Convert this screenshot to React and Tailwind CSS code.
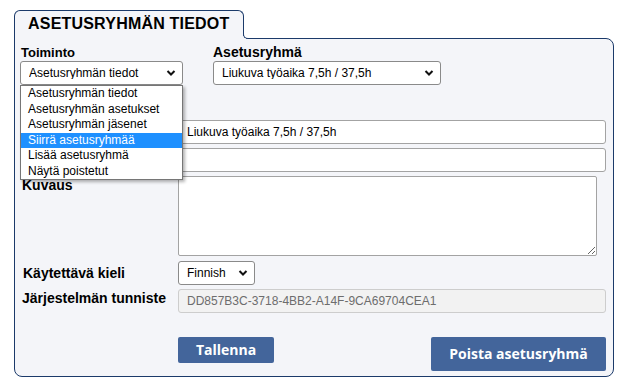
import React from 'react';

const toiminnot = [
  'Asetusryhmän tiedot',
  'Asetusryhmän asetukset',
  'Asetusryhmän jäsenet',
  'Siirrä asetusryhmää',
  'Lisää asetusryhmä',
  'Näytä poistetut',
];

const Chevron = () => (
  <svg
    className="absolute right-[7px] top-1/2 -translate-y-1/2 pointer-events-none"
    width="10"
    height="7"
    viewBox="0 0 10 7"
  >
    <polyline points="1.5,1.5 5,5 8.5,1.5" fill="none" stroke="#111" strokeWidth="2" />
  </svg>
);

const Select = ({ width, value, options }) => (
  <div className={`relative ${width}`}>
    <select
      defaultValue={value}
      className="appearance-none w-full h-[24px] bg-white border border-[#8a8a8a] rounded-[3px] pl-[8px] pr-6 text-[12px] text-black leading-none outline-none"
    >
      {options.map((o) => (
        <option key={o}>{o}</option>
      ))}
    </select>
    <Chevron />
  </div>
);

const Label = ({ children, className = '' }) => (
  <div className={`text-[14px] leading-[16px] font-bold text-black ${className}`}>{children}</div>
);

const App = () => {
  return (
    <div className="w-[622px] h-[384px] bg-white pt-[10px] pl-[14px] font-['Liberation_Sans',Arial,sans-serif]">
      <div className="w-[600px]">
        {/* välilehti */}
        <div className="relative z-10 w-[230px] h-[29px] -mb-px border border-b-0 border-[#1b3a6a] rounded-t-[6px] bg-[#f4f5f9] pl-[13px] pt-[3px]">
          <div className="text-[16px] leading-[20px] font-bold tracking-[0.2px] text-black">
            ASETUSRYHMÄN TIEDOT
          </div>
          <div className="absolute bottom-0 -right-[3px] w-[4px] h-[3px] bg-[#f4f5f9]" />
          <div className="absolute bottom-0 -right-[6px] w-[6px] h-[6px] border-l border-b border-[#1b3a6a] rounded-bl-[5px] bg-white" />
        </div>

        <div className="relative h-[339px] border border-[#1b3a6a] rounded-tr-[8px] rounded-b-[8px] bg-[#f4f5f9] pt-[6px]">
          {/* ylärivi */}
          <div className="flex gap-[30px] pl-[5px]">
            <div className="relative">
              <div className="h-[15px] text-[13px] leading-[15px] font-bold text-black pl-px">Toiminto</div>
              <Select width="w-[163px]" value="Asetusryhmän tiedot" options={toiminnot} />
              {/* avattu lista */}
              <div className="absolute z-20 left-0 top-full w-[163px] h-[95px] bg-white border border-[#767676] shadow-[2px_2px_3px_rgba(0,0,0,0.3)] flex flex-col">
                {toiminnot.map((t) => (
                  <div
                    key={t}
                    className={`h-[15.5px] leading-[15.5px] pl-[7px] text-[12px] whitespace-nowrap ${
                      t === 'Siirrä asetusryhmää' ? 'bg-[#1e90ff] text-white' : 'text-black'
                    }`}
                  >
                    {t}
                  </div>
                ))}
              </div>
            </div>
            <div>
              <div className="h-[15px] text-[14px] leading-[15px] font-bold text-black">Asetusryhmä</div>
              <Select
                width="w-[228px]"
                value="Liukuva työaika 7,5h / 37,5h"
                options={['Liukuva työaika 7,5h / 37,5h']}
              />
            </div>
          </div>

          {/* lomake */}
          <div className="mt-[35px] pl-[7px] pr-[7px] flex flex-col gap-[4px]">
            <div className="grid grid-cols-[156px_1fr] items-start">
              <div />
              <input
                defaultValue="Liukuva työaika 7,5h / 37,5h"
                className="h-[24px] bg-white border border-[#a3a3a3] rounded-[3px] pl-[8px] text-[12px] text-black outline-none"
              />
            </div>
            <div className="grid grid-cols-[156px_1fr] items-start">
              <div />
              <input className="h-[24px] bg-white border border-[#a3a3a3] rounded-[3px] pl-[8px] text-[12px] text-black outline-none" />
            </div>
            <div className="grid grid-cols-[156px_1fr] items-start">
              <Label className="pt-[1px]">Kuvaus</Label>
              <textarea className="w-[419px] h-[80px] bg-white border border-[#a3a3a3] rounded-[2px] px-[8px] py-[3px] text-[12px] outline-none" />
            </div>
            <div className="grid grid-cols-[156px_1fr] items-center">
              <Label className="pl-px">Käytettävä kieli</Label>
              <Select width="w-[77px]" value="Finnish" options={['Finnish', 'Swedish', 'English']} />
            </div>
            <div className="grid grid-cols-[156px_1fr] items-start">
              <Label className="pt-[1px]">Järjestelmän tunniste</Label>
              <input
                disabled
                defaultValue="DD857B3C-3718-4BB2-A14F-9CA69704CEA1"
                className="h-[24px] bg-[#f2f2f2] border border-[#cdcdcd] rounded-[3px] pl-[8px] text-[12px] text-[#6d6d6d] outline-none"
              />
            </div>
          </div>

          {/* painikkeet */}
          <div className="mt-[24px] pl-[163px] pr-[7px] flex items-start justify-between font-['Open_Sans',sans-serif]">
            <button className="w-[96px] h-[26px] bg-[#43659b] rounded-[2px] text-white text-[14px] font-bold leading-none">
              Tallenna
            </button>
            <button className="w-[175px] h-[34px] bg-[#43659b] rounded-[2px] text-white text-[14px] font-bold leading-none">
              Poista asetusryhmä
            </button>
          </div>
        </div>
      </div>
    </div>
  );
};

export default App;
